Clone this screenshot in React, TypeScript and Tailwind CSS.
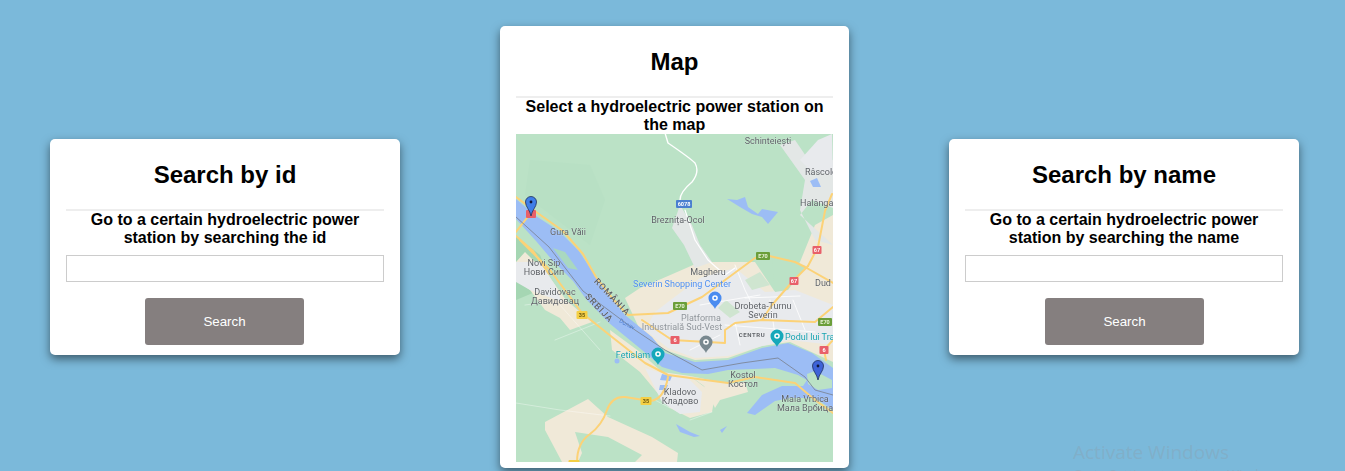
import React from 'react'

const sans = 'font-["Liberation_Sans",Arial,sans-serif]'

const Card: React.FC<{ title: string; text: string; children?: React.ReactNode; className: string }> = ({
  title,
  text,
  children,
  className
}) => (
  <section className={`${className} bg-white rounded-[5px] px-4 pt-[22px] shadow-[0_4px_10px_rgba(0,0,0,0.5)]`}>
    <h2 className="text-2xl leading-7 font-bold text-center text-black">{title}</h2>
    <hr className="mt-5 border-0 h-0.5 bg-[#eeeeee]" />
    <p className="text-base leading-[18px] font-bold text-center text-black">{text}</p>
    {children}
  </section>
)

const SearchCard: React.FC<{ title: string; text: string; btn: string }> = ({ title, text, btn }) => (
  <Card title={title} text={text} className="w-[350px] pb-2.5">
    <input className="block mt-2 w-full h-[27px] border border-[#cccccc] bg-white outline-none" />
    <button className={`${btn} block mt-4 w-[159px] h-[47px] rounded-[3px] bg-[#857f7f] text-white text-[13.33px]`}>
      Search
    </button>
  </Card>
)

type Lbl = [string, number, number]

const greyLabels: Lbl[] = [
  ['Schinteiești', 768, 144],
  ['Breznița-Ocol', 678, 223],
  ['Gura Văii', 568, 235],
  ['Novi Sip', 544, 266],
  ['Нови Сип', 544, 275],
  ['Davidovac', 555, 295],
  ['Давидовац', 555, 304],
  ['Magheru', 708, 275],
  ['Drobeta-Turnu', 763, 309],
  ['Severin', 763, 318],
  ['Kostol', 743, 378],
  ['Костол', 743, 387],
  ['Kladovo', 680, 395],
  ['Кладово', 680, 404],
  ['Mala Vrbica', 805, 402],
  ['Мала Врбица', 805, 411]
]

const shields: [string, number, number, number, string, string][] = [
  ['6078', 684, 204, 16, '#4a7fd0', '#ffffff'],
  ['E70', 680, 306, 14, '#6b9e3a', '#e8f2d8'],
  ['E70', 763, 256, 14, '#6b9e3a', '#e8f2d8'],
  ['E70', 825, 322, 14, '#6b9e3a', '#e8f2d8'],
  ['67', 817, 250, 9, '#e8606a', '#ffffff'],
  ['67', 794, 281, 9, '#e8606a', '#ffffff'],
  ['6', 675, 340, 9, '#e8606a', '#ffffff'],
  ['6', 824, 350, 9, '#e8606a', '#ffffff'],
  ['35', 582, 315, 11, '#f4cf45', '#6b5a12'],
  ['35', 646, 401, 11, '#f4cf45', '#6b5a12'],
  ['35', 574, 464, 11, '#f4cf45', '#6b5a12']
]

const PoiPin: React.FC<{ x: number; y: number; color: string }> = ({ x, y, color }) => (
  <g transform={`translate(${x} ${y})`}>
    <path d="M0 11C-1.5 7-6.5 5-6.5 0a6.5 6.5 0 0 1 13 0C6.5 5 1.5 7 0 11Z" fill={color} />
    <circle r="2.8" fill="#ffffff" />
    <circle r="1.3" fill={color} />
  </g>
)

const BluePin: React.FC<{ x: number; y: number; dark?: boolean }> = ({ x, y, dark }) => (
  <g transform={`translate(${x} ${y})`}>
    <path
      d="M0 14C-1 8-5.5 5-5.5 0a5.5 5.5 0 0 1 11 0C5.5 5 1 8 0 14Z"
      fill={dark ? '#3f63d8' : '#3f7fe8'}
      stroke="#20305c"
      strokeWidth="0.8"
    />
    <circle r="1.4" fill="#10183a" />
  </g>
)

const MapPicture: React.FC = () => (
  <svg viewBox="516 134 317 328" className="block w-[317px] h-[328px] blur-[0.6px]">
    <rect x="516" y="134" width="317" height="328" fill="#bbe2c6" />

    {/* relief */}
    <path d="M530 160 590 165 605 200 590 245 560 222 525 195Z" fill="#b8e0c4" />
    <path d="M516 236 540 255 552 285 516 300Z" fill="#a5d6b3" />

    {/* urban + land use */}
    <path
      d="M625 298 640 288 668 276 700 262 735 262 755 262 775 292 800 262 815 225 833 215 833 362 790 342 762 346 728 358 695 360 665 350 640 330Z"
      fill="#f0e9d8"
    />
    <path
      d="M668 302 700 278 735 268 765 292 795 290 833 305 833 345 790 340 762 346 728 356 695 358 668 348 645 330 655 312Z"
      fill="#e8eaed"
    />
    <path d="M772 258 806 266 788 290 775 292Z" fill="#bbe2c6" />
    <path d="M795 140 812 165 833 160 833 208 812 200 800 215 833 245 815 240 800 210 805 180 780 145Z" fill="#e3e7e6" />
    <path d="M832 134 833 175 810 170 800 160 818 140Z" fill="#e8eaed" />
    <path d="M680 205 692 225 700 245 712 262 695 268 684 245 672 228Z" fill="#e3e7e6" />
    <path d="M525 252 548 275 566 300 592 322 570 330 560 318 545 310 530 290 516 280 516 262Z" fill="#f0e9d8" />
    <path d="M516 262 540 262 555 285 562 302 530 290 516 282Z" fill="#e8eaed" />
    <path d="M610 330 640 352 662 372 690 376 715 395 712 412 690 418 670 408 640 372 612 350Z" fill="#f0e9d8" />
    <path d="M645 368 665 374 688 378 702 392 700 412 680 414 662 402Z" fill="#e8eaed" />
    <path d="M690 376 730 384 745 382 748 392 720 400 715 408 704 386Z" fill="#f0e9d8" />
    <path d="M545 422 588 399 608 417 652 437 678 453 677 462 635 462 642 455 608 437 575 432 582 453 578 462 562 462 545 430Z" fill="#f0e9d8" />
    <path d="M745 280 760 272 770 285 752 290Z" fill="#cfe5d0" />
    <path d="M718 308 726 300 740 312 730 318Z" fill="#cfe5d0" />

    {/* water */}
    <path
      d="M516 199 536 216 559 231 579 251 596 277 608 294 625 315 652 337 665 353 695 362 728 360 762 348 788 343 812 353 833 368 833 410 815 398 790 398 775 401 755 415 747 413 762 395 782 386 803 386 807 380 798 375 775 368 728 370 708 374 682 373 662 367 642 350 609 323 586 299 573 281 553 261 536 241 516 219Z"
      fill="#9cbdf5"
    />
    <path d="M807 374 815 371 832 380 832 388 818 390 808 384Z" fill="#bbe2c6" />
    <path d="M553 248 565 252 578 270 568 268Z" fill="#a9d8c0" />
    <path d="M727 199 737 200 745 197 748 207 758 214 762 209 778 212 768 224 762 217 752 214 740 207Z" fill="#9cbdf5" />
    <path d="M810 181 817 178 821 187 813 187Z" fill="#9cbdf5" />
    <circle cx="617" cy="361" r="2.5" fill="#9cbdf5" />
    <path d="M662 374 672 376 670 381 660 380Z" fill="#9cbdf5" />
    <path d="M660 385 668 385 666 390 659 390Z" fill="#9cbdf5" />
    <path d="M676 424 690 432 700 436 694 437 680 432Z" fill="#9cbdf5" />
    <path d="M720 430 727 426 722 433Z" fill="#9cbdf5" />

    {/* white roads and streets */}
    <g fill="none" stroke="#ffffff" strokeLinecap="round" strokeLinejoin="round">
      <path d="M665 133 668 143 Q690 158 695 163 Q700 172 692 182 Q680 192 680 200" strokeWidth="1.4" />
      <path d="M685 210 695 240 708 260 725 275 735 268" strokeWidth="1.2" />
      <path
        d="M735 265 745 290 760 320 M700 305 760 295 M725 325 815 332 M745 298 800 296 M770 300 775 335 M735 322 740 345 M690 350 720 335 M793 300 805 330"
        strokeWidth="0.8"
      />
      <path d="M525 305 548 302 M555 340 600 322 M516 403 560 410 610 416 M600 350 560 305 M655 400 670 408 M712 412 690 420" strokeWidth="0.6" opacity="0.6" />
    </g>

    {/* yellow roads */}
    <g fill="none" stroke="#fcd277" strokeWidth="2" strokeLinecap="round" strokeLinejoin="round">
      <path d="M516 197 539 214 563 231 583 254 596 277 613 299 628 315 668 313 702 297 755 258 765 255 795 262 805 267 833 283" />
      <path d="M808 266 818 247 825 211 832 194" />
      <path d="M808 266 792 282 772 305 762 320" />
      <path d="M642 320 672 340 725 343 725 330 735 323 762 320 815 322 833 307" />
      <path d="M520 240 550 270 582 313 612 337 645 363 668 375 728 383 755 377 795 383 815 400 833 413" />
      <path d="M668 377 Q664 400 650 401 L625 397 Q612 396 607 410 Q602 425 590 434 Q577 443 577 462" />
      <path d="M516 236 533 251 549 274" />
      <path d="M530 214 516 232" />
      <path d="M833 340 824 350 826 360" />
    </g>

    {/* border */}
    <path
      d="M516 217 549 247 583 291 635 330 665 350 702 370 742 363 778 358 805 377 815 390 833 395"
      fill="none"
      stroke="#7d8798"
      strokeWidth="0.9"
    />

    {/* shields */}
    {shields.map(([t, x, y, w, bg, fg], i) => (
      <g key={i}>
        <rect x={x - w / 2} y={y - 4} width={w} height="8" rx="1" fill={bg} />
        <text x={x} y={y + 2} textAnchor="middle" fontSize="5.5" fontFamily="Roboto" fontWeight="700" fill={fg}>
          {t}
        </text>
      </g>
    ))}

    {/* labels */}
    <g fontFamily="Roboto, sans-serif" fontSize="9" fill="#5f6368" textAnchor="middle" stroke="#ffffff" strokeOpacity="0.35" strokeWidth="0.6" paintOrder="stroke">
      {greyLabels.map(([t, x, y]) => (
        <text key={t} x={x} y={y}>
          {t}
        </text>
      ))}
      <text x="805" y="175" textAnchor="start">Râscolo</text>
      <text x="800" y="206" textAnchor="start">Halânga</text>
      <text x="815" y="286" textAnchor="start">Dud</text>
      <text x="701" y="321" fill="#8d9399">Platforma</text>
      <text x="682" y="330" fill="#8d9399">Industrială Sud-Vest</text>
      <text x="752" y="337" fontSize="6" fontWeight="700" letterSpacing="0.6">CENTRU</text>
      <text x="682" y="287" fill="#4f8ff0">Severin Shopping Center</text>
      <text x="785" y="340" textAnchor="start" fill="#16a2b0">Podul lui Tra</text>
      <text x="633" y="358" fill="#16a2b0">Fetislam</text>
      <text transform="translate(610 299) rotate(46)" fontSize="9" fontWeight="500" letterSpacing="1">ROMÂNIA</text>
      <text transform="translate(597 310) rotate(46)" fontSize="9" fontWeight="500" letterSpacing="1">SRBIJA</text>
      <text transform="translate(626 326) rotate(28)" fontSize="6" fill="#4f7fd0" strokeWidth="0">Dunav</text>
    </g>

    {/* POI */}
    <PoiPin x={715} y={298} color="#4a8cf0" />
    <PoiPin x={706} y={342} color="#78888f" />
    <PoiPin x={777} y={336} color="#16a8ba" />
    <PoiPin x={658} y={354} color="#16a8ba" />

    {/* markers */}
    <rect x="526" y="210" width="10" height="8" rx="1" fill="#e8606a" />
    <BluePin x={531} y={202} />
    <BluePin x={818} y={366} dark />
  </svg>
)

const App: React.FC = () => {
  return (
    <div className={`${sans} relative h-[471px] w-full overflow-hidden bg-[#7bb9da]`}>
      <div className="flex items-center gap-[100px] pl-[50px] pt-[26px]">
        <SearchCard
          title="Search by id"
          text="Go to a certain hydroelectric power station by searching the id"
          btn="ml-[79px]"
        />
        <Card
          title="Map"
          text="Select a hydroelectric power station on the map"
          className="w-[349px] pb-1.5"
        >
          <MapPicture />
        </Card>
        <SearchCard
          title="Search by name"
          text="Go to a certain hydroelectric power station by searching the name"
          btn="ml-[80px]"
        />
      </div>
      {/* windows watermark */}
      <div className='absolute left-[1073px] top-[439px] font-["Open_Sans",sans-serif] text-[#8a9fae]/40'>
        <div className="text-[19px] leading-[27px]">Activate Windows</div>
        <div className="text-[13px] leading-[16px]">Go to Settings to activate Windows.</div>
      </div>
    </div>
  )
}

export default App
